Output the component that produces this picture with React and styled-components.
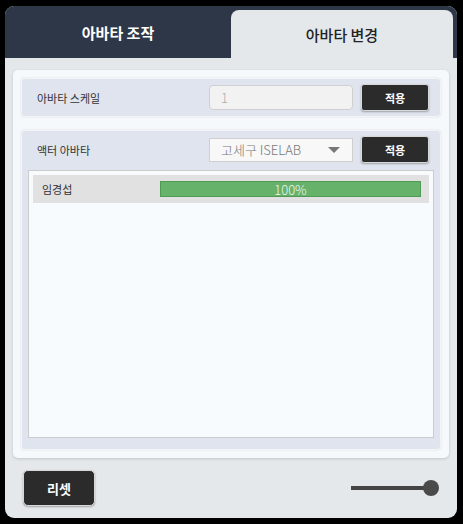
import styled, { createGlobalStyle } from "styled-components";

const GlobalStyle = createGlobalStyle`
  html, body {
    margin: 0;
    padding: 0;
    background: #000;
  }
  body {
    font-family: "Noto Sans CJK KR", "Noto Sans", sans-serif;
  }
`;

const App = () => {
  return (
    <>
      <GlobalStyle />
      <Panel>
        <TabBar>
          <Tab>아바타 조작</Tab>
          <Tab $active>아바타 변경</Tab>
        </TabBar>
        <Body>
          <Card>
            <Row>
              <Label>아바타 스케일</Label>
              <Input>1</Input>
              <ApplyBtn>적용</ApplyBtn>
            </Row>
            <Section>
              <SectionHead>
                <Label>액터 아바타</Label>
                <Select>
                  <span>고세구 ISELAB</span>
                  <Caret />
                </Select>
                <ApplyBtn>적용</ApplyBtn>
              </SectionHead>
              <List>
                <Item>
                  <Name>임경섭</Name>
                  <Progress>
                    <Fill style={{ width: "100%" }} />
                    <Percent>100%</Percent>
                  </Progress>
                </Item>
              </List>
            </Section>
          </Card>
        </Body>
        <Footer>
          <ResetBtn>리셋</ResetBtn>
          <Slider>
            <Track />
            <Thumb />
          </Slider>
        </Footer>
      </Panel>
    </>
  );
};

const Panel = styled.div`
  width: 452px;
  height: 512px;
  margin: 6px 0 0 5px;
  background: #e4e8ea;
  border-radius: 9px;
  overflow: hidden;
  display: flex;
  flex-direction: column;
`;

const TabBar = styled.div`
  height: 52px;
  background: #2e3747;
  display: flex;
  flex: 0 0 auto;
`;

const Tab = styled.div`
  display: flex;
  align-items: center;
  justify-content: center;
  font-size: 15px;
  ${(p) =>
    p.$active
      ? `
    flex: 1;
    margin: 4px 4px 0 0;
    background: #e4e8ea;
    border-radius: 8px 8px 0 0;
    color: #222;
    font-weight: 500;
  `
      : `
    flex: 0 0 226px;
    color: #fff;
    font-weight: 700;
  `}
`;

const Body = styled.div`
  flex: 1;
  display: flex;
  padding: 12px 8px 0;
  min-height: 0;
`;

const Card = styled.div`
  flex: 1;
  background: #f6f9fc;
  border-radius: 5px;
  box-shadow: 0 1px 3px rgba(0, 0, 0, 0.15);
  padding: 8px;
  display: flex;
  flex-direction: column;
  gap: 13px;
`;

const Row = styled.div`
  height: 39px;
  box-sizing: border-box;
  background: #dfe4ee;
  border: 1px solid #f2f4f7;
  border-radius: 4px;
  box-shadow: 0 0 2px rgba(0, 0, 0, 0.12);
  display: flex;
  align-items: center;
  padding: 0 11px 0 15px;
`;

const Label = styled.div`
  flex: 1;
  font-size: 11px;
  color: #333;
`;

const Input = styled.div`
  width: 144px;
  height: 25px;
  box-sizing: border-box;
  background: #f2f2f2;
  border: 1px solid #cfcfcf;
  border-radius: 4px;
  font-size: 13px;
  font-weight: 300;
  color: #aaa;
  display: flex;
  align-items: center;
  padding-left: 11px;
  margin-right: 8px;
`;

const ApplyBtn = styled.div`
  width: 68px;
  height: 27px;
  box-sizing: border-box;
  background: #2b2b2b;
  border: 1px solid #d8d8d8;
  border-radius: 3px;
  box-shadow: 0 1px 2px rgba(0, 0, 0, 0.3);
  color: #fff;
  font-size: 11px;
  font-weight: 700;
  display: flex;
  align-items: center;
  justify-content: center;
`;

const Section = styled.div`
  flex: 1;
  box-sizing: border-box;
  background: #dfe4ee;
  border: 1px solid #f2f4f7;
  border-radius: 4px;
  box-shadow: 0 0 2px rgba(0, 0, 0, 0.12);
  display: flex;
  flex-direction: column;
  padding: 5px 6px 11px;
  gap: 7px;
`;

const SectionHead = styled.div`
  display: flex;
  align-items: center;
  padding: 0 5px 0 9px;
`;

const Select = styled.div`
  width: 144px;
  height: 24px;
  box-sizing: border-box;
  background: #f8f8f8;
  border: 1px solid #cfcfcf;
  font-size: 13px;
  font-weight: 300;
  color: #777;
  display: flex;
  align-items: center;
  justify-content: space-between;
  padding: 0 12px 0 11px;
  margin-right: 8px;
`;

const Caret = styled.div`
  width: 0;
  height: 0;
  border-left: 6px solid transparent;
  border-right: 6px solid transparent;
  border-top: 6px solid #777;
`;

const List = styled.div`
  flex: 1;
  background: #f7fbfe;
  border: 1px solid #cccccc;
  padding: 4px;
`;

const Item = styled.div`
  height: 28px;
  background: #e1e1e1;
  display: flex;
  align-items: center;
  padding: 0 8px 0 9px;
`;

const Name = styled.div`
  width: 118px;
  font-size: 11px;
  color: #333;
`;

const Progress = styled.div`
  position: relative;
  flex: 1;
  height: 16px;
  box-sizing: border-box;
  border: 1px solid #4f9a55;
  background: #e1e1e1;
`;

const Fill = styled.div`
  height: 100%;
  background: #67b26b;
`;

const Percent = styled.div`
  position: absolute;
  inset: 0;
  display: flex;
  align-items: center;
  justify-content: center;
  font-size: 13px;
  font-weight: 300;
  color: #eef6ee;
`;

const Footer = styled.div`
  flex: 0 0 auto;
  display: flex;
  align-items: center;
  justify-content: space-between;
  padding: 12px 18px 12px 18px;
`;

const ResetBtn = styled.div`
  width: 72px;
  height: 36px;
  box-sizing: border-box;
  background: #2b2b2b;
  border: 1px solid #d8d8d8;
  border-radius: 5px;
  box-shadow: 0 1px 2px rgba(0, 0, 0, 0.3);
  color: #fff;
  font-size: 13px;
  font-weight: 700;
  display: flex;
  align-items: center;
  justify-content: center;
`;

const Slider = styled.div`
  width: 88px;
  height: 16px;
  display: flex;
  align-items: center;
`;

const Track = styled.div`
  flex: 1;
  height: 4px;
  background: #444;
`;

const Thumb = styled.div`
  width: 16px;
  height: 16px;
  border-radius: 50%;
  background: #4a4a4a;
  margin-left: -2px;
`;

export default App;
